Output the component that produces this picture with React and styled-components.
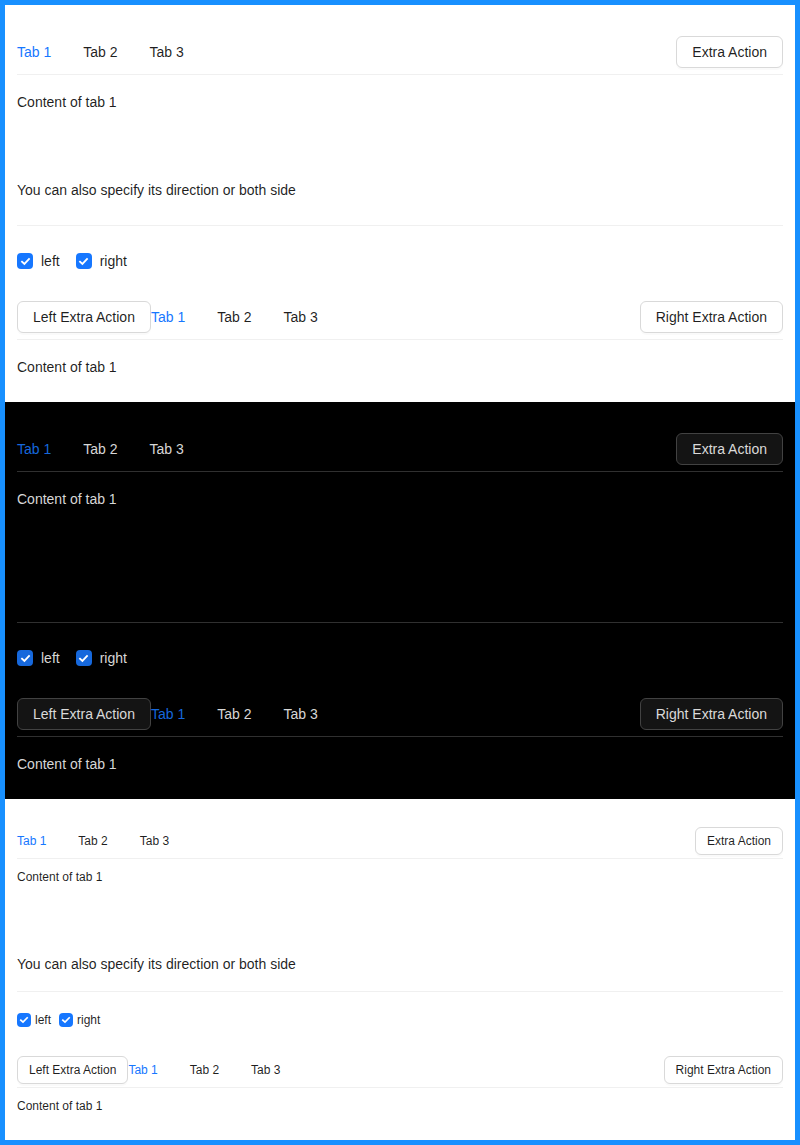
import React from "react";
import styled, { createGlobalStyle } from "styled-components";

const GlobalStyle = createGlobalStyle`
  html, body {
    margin: 0;
    padding: 0;
    background: #ffffff;
  }
  body {
    font-family: "Liberation Sans", Arial, "Noto Sans", sans-serif;
    font-size: 14px;
  }
`;

const Frame = styled.div`
  border: 5px solid #1890ff;
  background: #ffffff;
`;

const Section = styled.section`
  padding: 24px 12px 24px;
  background: ${(p) => (p.$dark ? "#000000" : "#ffffff")};
  color: ${(p) => (p.$dark ? "rgba(255,255,255,0.85)" : "rgba(0,0,0,0.88)")};
`;

/* the bottom line sits on the last pixel of the nav, as antd draws it */
const Nav = styled.div`
  display: flex;
  align-items: center;
  height: ${(p) => (p.$small ? "36px" : "46px")};
  box-shadow: inset 0 -1px 0 ${(p) => (p.$dark ? "#303030" : "#f0f0f0")};
  margin-bottom: ${(p) => (p.$small ? "8px" : "16px")};
`;

const TabList = styled.div`
  display: flex;
  align-items: center;
  gap: 32px;
`;

const Tab = styled.div`
  font-size: ${(p) => (p.$small ? "12px" : "14px")};
  line-height: ${(p) => (p.$small ? "20px" : "22px")};
  color: ${(p) =>
    p.$active
      ? p.$dark
        ? "#1668dc"
        : "#1677ff"
      : p.$dark
      ? "rgba(255,255,255,0.85)"
      : "rgba(0,0,0,0.88)"};
  cursor: pointer;
`;

const Button = styled.button`
  box-sizing: border-box;
  font-family: inherit;
  font-size: ${(p) => (p.$small ? "12px" : "14px")};
  height: ${(p) => (p.$small ? "28px" : "32px")};
  padding: 0 ${(p) => (p.$small ? "11px" : "15px")};
  border-radius: 6px;
  border: 1px solid ${(p) => (p.$dark ? "#424242" : "#d9d9d9")};
  background: ${(p) => (p.$dark ? "#141414" : "#ffffff")};
  color: ${(p) => (p.$dark ? "rgba(255,255,255,0.85)" : "rgba(0,0,0,0.88)")};
  box-shadow: ${(p) => (p.$dark ? "none" : "0 2px 0 rgba(0,0,0,0.02)")};
  cursor: pointer;
  white-space: nowrap;
  margin-left: ${(p) => (p.$right ? "auto" : "0")};
`;

const Content = styled.div`
  font-size: ${(p) => (p.$small ? "12px" : "14px")};
  line-height: ${(p) => (p.$small ? "20px" : "22px")};
`;

const Note = styled.p`
  margin: 66px 0 0;
  font-size: 14px;
  line-height: 22px;
  color: rgba(0, 0, 0, 0.88);
`;

const Divider = styled.hr`
  border: 0;
  border-top: 1px solid ${(p) => (p.$dark ? "#303030" : "#f0f0f0")};
  margin: ${(p) => (p.$small ? "16px 0 18px" : "24px 0 24px")};
`;

const CheckRow = styled.div`
  display: flex;
  align-items: center;
  gap: ${(p) => (p.$small ? "8px" : "16px")};
  height: ${(p) => (p.$small ? "20px" : "22px")};
  margin-bottom: 22px;
`;

const CheckLabel = styled.label`
  display: flex;
  align-items: center;
  gap: ${(p) => (p.$small ? "4px" : "8px")};
  font-size: ${(p) => (p.$small ? "12px" : "14px")};
  cursor: pointer;
`;

const Box = styled.span`
  display: flex;
  align-items: center;
  justify-content: center;
  box-sizing: border-box;
  width: ${(p) => (p.$small ? "14px" : "16px")};
  height: ${(p) => (p.$small ? "14px" : "16px")};
  border-radius: 4px;
  background: ${(p) => (p.$dark ? "#1668dc" : "#1677ff")};
`;

function Check({ label, dark, small }) {
  const s = small ? 10 : 11;
  return (
    <CheckLabel $small={small}>
      <Box $dark={dark} $small={small}>
        <svg width={s} height={s} viewBox="0 0 12 12">
          <polyline
            points="2.2,6.2 4.8,8.6 9.8,3.4"
            fill="none"
            stroke="#ffffff"
            strokeWidth="2"
            strokeLinecap="square"
          />
        </svg>
      </Box>
      {label}
    </CheckLabel>
  );
}

function TabBar({ dark, small, left, right }) {
  return (
    <Nav $dark={dark} $small={small}>
      {left && (
        <Button $dark={dark} $small={small}>
          {left}
        </Button>
      )}
      <TabList>
        {["Tab 1", "Tab 2", "Tab 3"].map((t, i) => (
          <Tab key={t} $active={i === 0} $dark={dark} $small={small}>
            {t}
          </Tab>
        ))}
      </TabList>
      <Button $right $dark={dark} $small={small}>
        {right}
      </Button>
    </Nav>
  );
}

function Demo({ dark, small }) {
  return (
    <Section $dark={dark}>
      <TabBar dark={dark} small={small} right="Extra Action" />
      <Content $small={small}>Content of tab 1</Content>
      <Note>You can also specify its direction or both side</Note>
      <Divider $dark={dark} $small={small} />
      <CheckRow $small={small}>
        <Check label="left" dark={dark} small={small} />
        <Check label="right" dark={dark} small={small} />
      </CheckRow>
      <TabBar
        dark={dark}
        small={small}
        left="Left Extra Action"
        right="Right Extra Action"
      />
      <Content $small={small}>Content of tab 1</Content>
    </Section>
  );
}

export default function App() {
  return (
    <>
      <GlobalStyle />
      <Frame>
        <Demo />
        <Demo dark />
        <Demo small />
      </Frame>
    </>
  );
}
